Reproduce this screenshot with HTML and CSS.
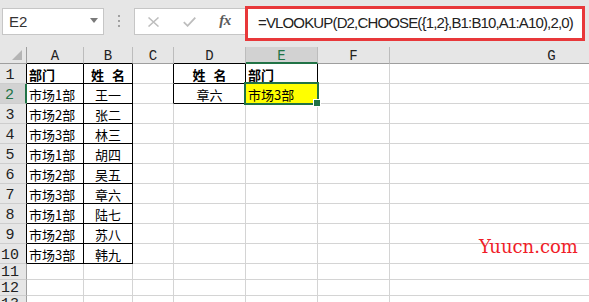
FILE: index.html
```html
<!DOCTYPE html>
<html lang="zh-CN">
<head>
<meta charset="utf-8">
<title>VLOOKUP CHOOSE</title>
<link rel="stylesheet" href="styles.css">
</head>
<body>
<div class="app">
  <div class="topbar">
    <div class="namebox">
      <span class="nb-text">E2</span>
      <svg class="nb-arrow" width="8" height="5" viewBox="0 0 8 5"><path d="M0 0H8L4 5Z" fill="#7a7a7a"/></svg>
    </div>
    <div class="dots">
      <svg width="2" height="12" viewBox="0 0 2 12"><rect x="0" y="0" width="2" height="2" fill="#a0a0a0"/><rect x="0" y="5" width="2" height="2" fill="#a0a0a0"/><rect x="0" y="10" width="2" height="2" fill="#a0a0a0"/></svg>
    </div>
    <div class="fbtns">
      <div class="slot"><svg width="11" height="10" viewBox="0 0 11 10"><path d="M0.5 0.5L10.5 9.5M10.5 0.5L0.5 9.5" stroke="#bdbdbd" stroke-width="1.5" fill="none"/></svg></div>
      <div class="slot"><svg width="13" height="10" viewBox="0 0 13 10"><path d="M0.8 5.2L4.6 8.8L12.3 0.7" stroke="#bdbdbd" stroke-width="1.8" fill="none"/></svg></div>
      <div class="slot"><span class="fx">fx</span></div>
    </div>
    <div class="formula">=VLOOKUP(D2,CHOOSE({1,2},B1:B10,A1:A10),2,0)</div>
  </div>

  <div class="sheet">
    <!-- header row -->
    <div class="c ch corner"><svg width="10" height="10" viewBox="0 0 10 10"><path d="M10 0V10H0Z" fill="#b4b4b4"/></svg></div>
    <div class="c ch bB">A</div>
    <div class="c ch bB">B</div>
    <div class="c ch">C</div>
    <div class="c ch bB">D</div>
    <div class="c ch selcol">E</div>
    <div class="c ch">F</div>
    <div class="c ch">G</div>

    <!-- row 1 -->
    <div class="c rh bR">1</div>
    <div class="c l b bR bB">部门</div>
    <div class="c m b bR bB"><span class="sp">姓 名</span></div>
    <div class="c bR"></div>
    <div class="c m b bR bB"><span class="sp">姓 名</span></div>
    <div class="c l b bR bB">部门</div>
    <div class="c"></div>
    <div class="c"></div>

    <!-- row 2 -->
    <div class="c rh selrow">2</div>
    <div class="c l bR bB">市场1部</div>
    <div class="c m bR bB">王一</div>
    <div class="c bR"></div>
    <div class="c m bR bB">章六</div>
    <div class="c l bR bB active">市场3部</div>
    <div class="c"></div>
    <div class="c"></div>

    <!-- row 3 -->
    <div class="c rh bR">3</div>
    <div class="c l bR bB">市场2部</div>
    <div class="c m bR bB">张二</div>
    <div class="c"></div><div class="c"></div><div class="c"></div><div class="c"></div><div class="c"></div>

    <!-- row 4 -->
    <div class="c rh bR">4</div>
    <div class="c l bR bB">市场3部</div>
    <div class="c m bR bB">林三</div>
    <div class="c"></div><div class="c"></div><div class="c"></div><div class="c"></div><div class="c"></div>

    <!-- row 5 -->
    <div class="c rh bR">5</div>
    <div class="c l bR bB">市场1部</div>
    <div class="c m bR bB">胡四</div>
    <div class="c"></div><div class="c"></div><div class="c"></div><div class="c"></div><div class="c"></div>

    <!-- row 6 -->
    <div class="c rh bR">6</div>
    <div class="c l bR bB">市场2部</div>
    <div class="c m bR bB">吴五</div>
    <div class="c"></div><div class="c"></div><div class="c"></div><div class="c"></div><div class="c"></div>

    <!-- row 7 -->
    <div class="c rh bR">7</div>
    <div class="c l bR bB">市场3部</div>
    <div class="c m bR bB">章六</div>
    <div class="c"></div><div class="c"></div><div class="c"></div><div class="c"></div><div class="c"></div>

    <!-- row 8 -->
    <div class="c rh bR">8</div>
    <div class="c l bR bB">市场1部</div>
    <div class="c m bR bB">陆七</div>
    <div class="c"></div><div class="c"></div><div class="c"></div><div class="c"></div><div class="c"></div>

    <!-- row 9 -->
    <div class="c rh bR">9</div>
    <div class="c l bR bB">市场2部</div>
    <div class="c m bR bB">苏八</div>
    <div class="c"></div><div class="c"></div><div class="c"></div><div class="c"></div><div class="c"></div>

    <!-- row 10 -->
    <div class="c rh bR">10</div>
    <div class="c l bR bB">市场3部</div>
    <div class="c m bR bB">韩九</div>
    <div class="c"></div><div class="c"></div><div class="c"></div><div class="c"></div><div class="c"></div>

    <!-- row 11 -->
    <div class="c rh sm">11</div>
    <div class="c"></div><div class="c"></div><div class="c"></div><div class="c"></div><div class="c"></div><div class="c"></div><div class="c"></div>

    <!-- row 12 -->
    <div class="c rh sm">12</div>
    <div class="c"></div><div class="c"></div><div class="c"></div><div class="c"></div><div class="c"></div><div class="c"></div><div class="c"></div>

    <!-- row 13 -->
    <div class="c rh sm">13</div>
    <div class="c"></div><div class="c"></div><div class="c"></div><div class="c"></div><div class="c"></div><div class="c"></div><div class="c"></div>
  </div>

  <div class="watermark">Yuucn.com</div>
</div>
</body>
</html>
```

FILE: styles.css
```css
html, body {
  margin: 0;
  padding: 0;
}
body {
  background: #e6e6e6;
  width: 589px;
  height: 302px;
  overflow: hidden;
}
.app {
  position: relative;
  width: 589px;
  height: 302px;
  overflow: hidden;
}

/* ---------- top bar ---------- */
.topbar {
  display: flex;
  align-items: flex-start;
  height: 47px;
}
.namebox {
  box-sizing: border-box;
  margin-left: 2px;
  margin-top: 8px;
  width: 102px;
  height: 27px;
  background: #fff;
  border: 1px solid #c6c6c6;
  display: flex;
  align-items: center;
  justify-content: space-between;
  padding: 0 5px 0 6px;
}
.nb-text {
  font: 15px "Liberation Sans", Arial, sans-serif;
  color: #333;
}
.nb-arrow {
  display: block;
  margin-top: -3px;
}
.dots {
  width: 30px;
  height: 47px;
  display: flex;
  justify-content: center;
  padding-top: 15px;
  box-sizing: border-box;
}
.dots svg { display: block; }
.fbtns {
  box-sizing: border-box;
  margin-top: 8px;
  width: 111px;
  height: 27px;
  background: #fff;
  border: 1px solid #c6c6c6;
  border-right: none;
  display: flex;
  align-items: center;
}
.slot {
  width: 36px;
  height: 25px;
  display: flex;
  align-items: center;
  justify-content: center;
}
.slot svg { display: block; }
.fx {
  font: italic bold 15px "Liberation Serif", "Times New Roman", serif;
  color: #5a5a5a;
  letter-spacing: -0.5px;
  margin-top: -2px;
}
.formula {
  box-sizing: border-box;
  margin-top: 6px;
  width: 340px;
  height: 35px;
  background: #fff;
  border: 3px solid #e8383a;
  padding-left: 10px;
  display: flex;
  align-items: center;
  font: 15px "Liberation Sans", Arial, sans-serif;
  letter-spacing: -0.85px;
  color: #222;
  white-space: nowrap;
  padding-bottom: 2px;
}

/* ---------- sheet ---------- */
.sheet {
  display: grid;
  grid-template-columns: 27px 57px 49px 41px 72px 72px 72px 324px;
  grid-template-rows: 17px repeat(10, 20px) 16px 16px 16px;
  height: 255px;
  overflow: hidden;
  background: #fff;
}
.c {
  box-sizing: border-box;
  border-right: 1px solid #d4d4d4;
  border-bottom: 1px solid #d4d4d4;
  display: flex;
  align-items: center;
  white-space: nowrap;
  font: 13px "Noto Sans CJK SC", sans-serif;
  color: #000;
  padding-top: 2px;
  line-height: 15px;
}
.ch {
  background: #e6e6e6;
  border-right-color: #bcbcbc;
  border-bottom-color: #9e9e9e;
  justify-content: center;
  font: 14px "Liberation Mono", "Courier New", monospace;
  color: #222;
  padding-top: 1px;
}
.corner {
  justify-content: flex-end;
  align-items: flex-end;
  padding: 0 4px 3px 0;
  border-right-color: #9e9e9e;
}
.corner svg { display: block; }
.selcol {
  background: #d2d2d2;
  color: #217346;
  border-bottom: 2px solid #217346;
  padding-top: 2px;
}
.rh {
  background: #e6e6e6;
  border-right-color: #9e9e9e;
  border-bottom-color: #cdcdcd;
  justify-content: center;
  padding-right: 6px;
  padding-top: 3px;
  font: 15px "Liberation Mono", "Courier New", monospace;
  color: #222;
}
.rh.sm {
  padding-top: 1px;
}
.selrow {
  background: #d2d2d2;
  color: #217346;
  border-right: 2px solid #217346;
}
.l {
  padding-left: 2px;
}
.m {
  justify-content: center;
}
.b {
  font-weight: bold;
}
.sp {
  word-spacing: 5px;
}
.bR {
  border-right-color: #000;
}
.bB {
  border-bottom-color: #000;
}
.active {
  position: relative;
  background: #ffff00;
}
.active::before {
  content: "";
  position: absolute;
  left: -2px;
  top: -2px;
  width: 75px;
  height: 23px;
  box-sizing: border-box;
  border: 2px solid #217346;
}
.active::after {
  content: "";
  position: absolute;
  left: 67px;
  top: 15px;
  width: 6px;
  height: 6px;
  background: #217346;
  border: 1px solid #fff;
}

/* ---------- watermark ---------- */
.watermark {
  position: absolute;
  left: 479px;
  top: 238px;
  font: 18px "DejaVu Serif", serif;
  line-height: 18px;
  color: #f01c28;
}
```
